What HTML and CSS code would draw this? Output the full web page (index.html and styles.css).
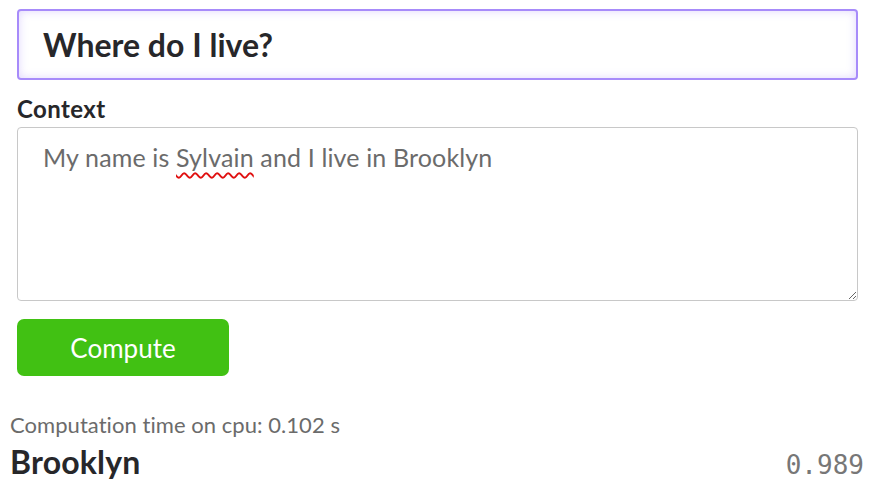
FILE: index.html
```html
<!DOCTYPE html>
<html>
<head>
<meta charset="utf-8">
<link rel="stylesheet" href="styles.css">
</head>
<body>
<div class="widget">
  <div class="question">Where do I live?</div>
  <div class="label">Context</div>
  <div class="context">My name is <span class="misspelled">Sylvain</span> and I live in Brooklyn</div>
  <button class="compute">Compute</button>
  <div class="output">
    <div class="timing">Computation time on cpu: 0.102 s</div>
    <div class="answer-row">
      <span class="answer">Brooklyn</span>
      <span class="score">0.989</span>
    </div>
  </div>
</div>
</body>
</html>
```

FILE: styles.css
```css
html, body {
  margin: 0;
  padding: 0;
  background: #ffffff;
}
body {
  font-family: Lato, "Open Sans", sans-serif;
  color: #1f2937;
}
.widget {
  padding: 9px 30px 0 17px;
}
.question {
  box-sizing: border-box;
  width: 841px;
  height: 71px;
  border: 2px solid #a78bfa;
  border-radius: 4px;
  box-shadow: inset 0 0 10px rgba(167, 139, 250, 0.35);
  padding: 0 24px;
  display: flex;
  align-items: center;
  font-size: 32px;
  font-weight: 700;
  color: #27272a;
}
.label {
  margin-top: 14px;
  font-size: 24px;
  font-weight: 700;
  color: #27272a;
  line-height: 30px;
  letter-spacing: 0.4px;
}
.context {
  box-sizing: border-box;
  margin-top: 3px;
  width: 841px;
  height: 174px;
  border: 1px solid #c8c8c8;
  border-radius: 4px;
  padding: 13px 25px;
  font-size: 25px;
  line-height: 32px;
  color: #6b6b6b;
  resize: both;
  overflow: auto;
  letter-spacing: 0.15px;
}
.misspelled {
  text-decoration: underline wavy #e01010;
  text-decoration-thickness: 1.5px;
  text-underline-offset: 5px;
}
.compute {
  display: block;
  margin-top: 18px;
  width: 212px;
  height: 57px;
  border: none;
  border-radius: 7px;
  background: #41c113;
  color: #ffffff;
  font-family: Lato, "Open Sans", sans-serif;
  font-size: 26px;
  padding: 0;
}
.output {
  margin-left: -7px;
  margin-top: 34px;
  width: 854px;
}
.timing {
  font-size: 22px;
  color: #6b6b6b;
  line-height: 30px;
  letter-spacing: 0.05px;
}
.answer-row {
  display: flex;
  justify-content: space-between;
  align-items: baseline;
  margin-top: 2px;
}
.answer {
  font-size: 32px;
  font-weight: 700;
  color: #27272a;
  letter-spacing: 0.2px;
}
.score {
  font-family: "DejaVu Sans Mono", monospace;
  font-size: 26px;
  color: #777777;
}
```
